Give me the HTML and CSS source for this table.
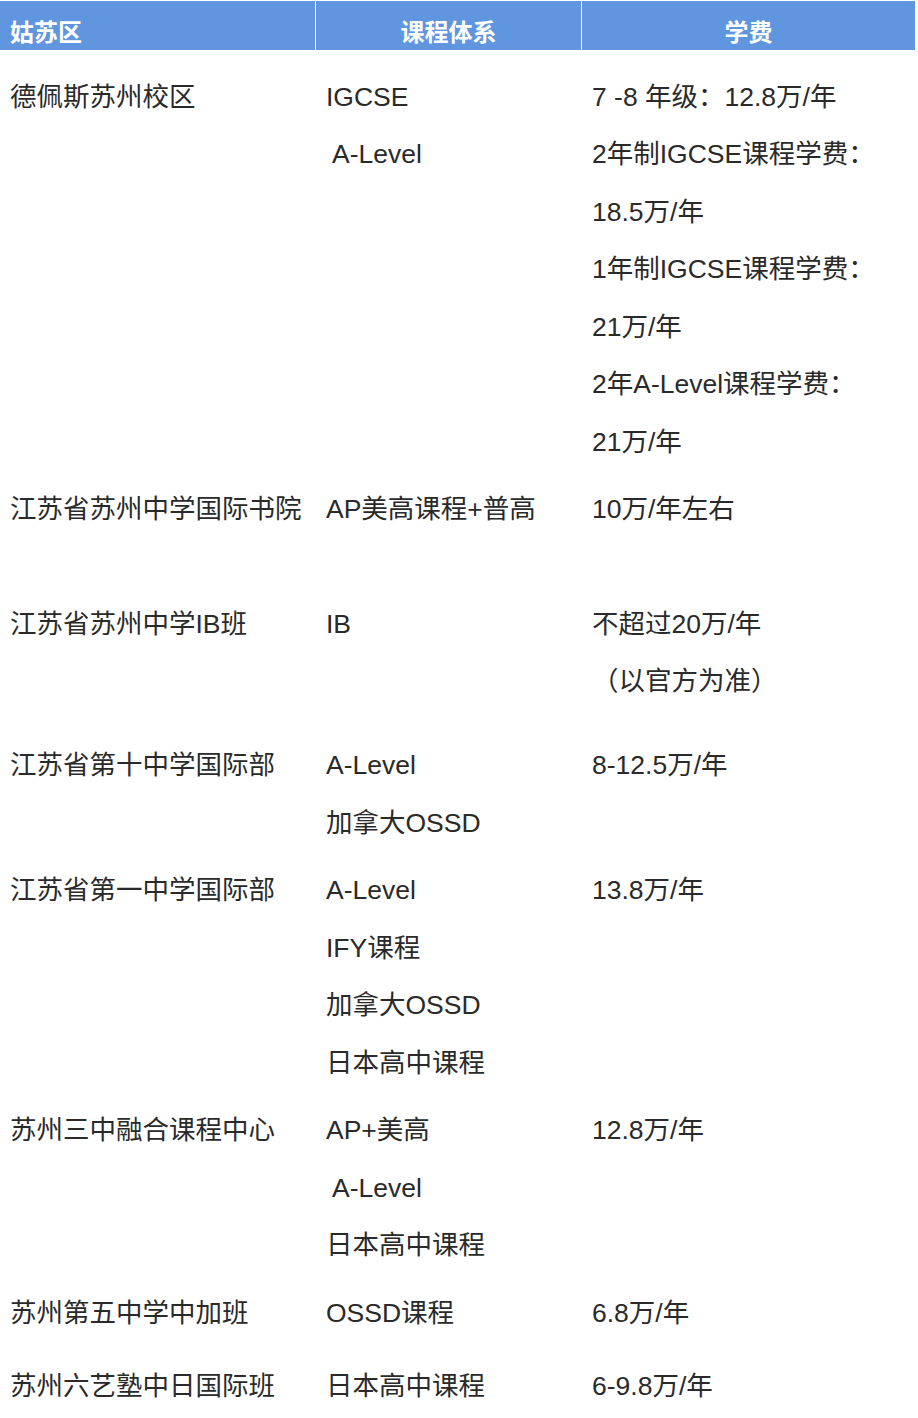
FILE: index.html
```html
<!DOCTYPE html>
<html lang="zh">
<head>
<meta charset="utf-8">
<title>姑苏区国际学校学费</title>
<link rel="stylesheet" href="styles.css">
</head>
<body>
<div class="table">
  <div class="head">
    <div class="hcell left">姑苏区</div>
    <div class="hcell center">课程体系</div>
    <div class="hcell center">学费</div>
  </div>

  <div class="row r1">
    <div class="cell"><p>德佩斯苏州校区</p></div>
    <div class="cell"><p>IGCSE</p><p class="indent">A-Level</p></div>
    <div class="cell">
      <p>7 -8 年级：12.8万/年</p>
      <p>2年制IGCSE课程学费：</p>
      <p>18.5万/年</p>
      <p>1年制IGCSE课程学费：</p>
      <p>21万/年</p>
      <p>2年A-Level课程学费：</p>
      <p>21万/年</p>
    </div>
  </div>

  <div class="row r2">
    <div class="cell"><p>江苏省苏州中学国际书院</p></div>
    <div class="cell"><p>AP美高课程+普高</p></div>
    <div class="cell"><p>10万/年左右</p></div>
  </div>

  <div class="row r3">
    <div class="cell"><p>江苏省苏州中学IB班</p></div>
    <div class="cell"><p>IB</p></div>
    <div class="cell"><p>不超过20万/年</p><p>（以官方为准）</p></div>
  </div>

  <div class="row r4">
    <div class="cell"><p>江苏省第十中学国际部</p></div>
    <div class="cell"><p>A-Level</p><p>加拿大OSSD</p></div>
    <div class="cell"><p>8-12.5万/年</p></div>
  </div>

  <div class="row r5">
    <div class="cell"><p>江苏省第一中学国际部</p></div>
    <div class="cell"><p>A-Level</p><p>IFY课程</p><p>加拿大OSSD</p><p>日本高中课程</p></div>
    <div class="cell"><p>13.8万/年</p></div>
  </div>

  <div class="row r6">
    <div class="cell"><p>苏州三中融合课程中心</p></div>
    <div class="cell"><p>AP+美高</p><p class="indent">A-Level</p><p>日本高中课程</p></div>
    <div class="cell"><p>12.8万/年</p></div>
  </div>

  <div class="row r7">
    <div class="cell"><p>苏州第五中学中加班</p></div>
    <div class="cell"><p>OSSD课程</p></div>
    <div class="cell"><p>6.8万/年</p></div>
  </div>

  <div class="row r8">
    <div class="cell"><p>苏州六艺塾中日国际班</p></div>
    <div class="cell"><p>日本高中课程</p></div>
    <div class="cell"><p>6-9.8万/年</p></div>
  </div>
</div>
</body>
</html>
```

FILE: styles.css
```css
html, body {
  margin: 0;
  padding: 0;
  background: #ffffff;
}

body {
  font-family: "Liberation Sans", "Noto Sans CJK SC", sans-serif;
  color: #2a2a2a;
}

.table {
  width: 915px;
  padding-top: 1px;
}

.head {
  display: grid;
  grid-template-columns: 315px 266px 334px;
  height: 49px;
  background: #6096df;
  box-sizing: border-box;
}

.hcell {
  color: #ffffff;
  font-weight: bold;
  font-size: 24px;
  line-height: 24px;
  padding-top: 20px;
  white-space: nowrap;
}

.hcell + .hcell {
  border-left: 1px solid #ffffff;
}

.hcell.left {
  padding-left: 10px;
}

.hcell.center {
  text-align: center;
}

.row {
  display: grid;
  grid-template-columns: 316px 266px 333px;
  padding-top: 5px;
  padding-bottom: 5px;
}

.cell {
  padding-left: 10px;
  overflow: hidden;
}

.cell p {
  margin: 0;
  font-size: 26.5px;
  line-height: 57.5px;
  white-space: nowrap;
}

.cell p.indent {
  padding-left: 6px;
}

.r1 { padding-top: 18.5px; }
.r2 { padding-bottom: 52px; }
.r3 { padding-bottom: 21.5px; }
.r7 { padding-bottom: 10.5px; }
```
